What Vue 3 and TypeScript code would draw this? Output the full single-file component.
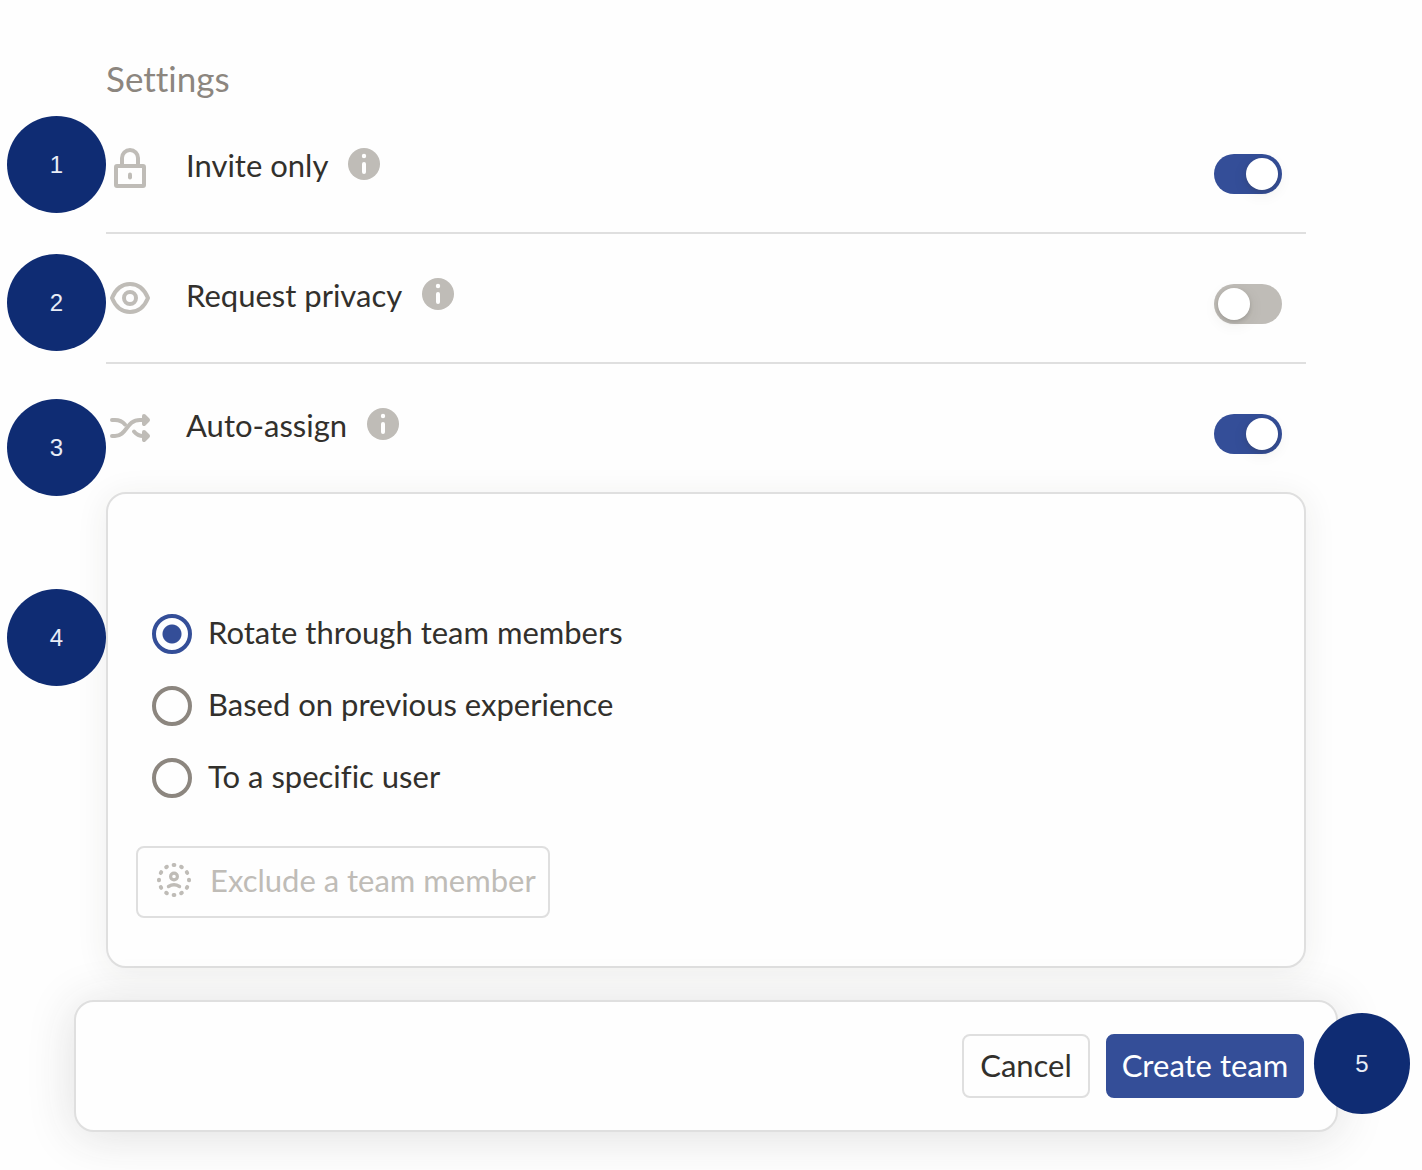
<script setup lang="ts">
import { reactive, ref } from 'vue'

interface Setting {
  id: 'lock' | 'eye' | 'shuffle'
  label: string
  step: number
  enabled: boolean
}

const settings = reactive<Setting[]>([
  { id: 'lock', label: 'Invite only', step: 1, enabled: true },
  { id: 'eye', label: 'Request privacy', step: 2, enabled: false },
  { id: 'shuffle', label: 'Auto-assign', step: 3, enabled: true },
])

const modes = [
  { value: 'rotate', label: 'Rotate through team members' },
  { value: 'experience', label: 'Based on previous experience' },
  { value: 'user', label: 'To a specific user' },
]
const mode = ref('rotate')
</script>

<template>
  <main class="page">
    <h2 class="title">Settings</h2>

    <section class="rows">
      <div v-for="s in settings" :key="s.id" class="row">
        <span class="marker" :class="`marker-${s.step}`">{{ s.step }}</span>
        <svg class="icon" viewBox="0 0 48 48" fill="none" stroke="currentColor" stroke-width="4" stroke-linecap="round" stroke-linejoin="round" aria-hidden="true">
          <template v-if="s.id === 'lock'">
            <rect x="10" y="22" width="28" height="20" rx="1" />
            <path d="M16 21V14a8 8 0 0 1 16 0V21" />
            <path d="M24 30.500V33.500" />
          </template>
          <template v-else-if="s.id === 'eye'">
            <path d="M6 24C9.500 15.500 16 10 24 10S38.500 15.500 42 24C38.500 32.500 32 38 24 38S9.500 32.500 6 24Z" />
            <circle cx="24" cy="24" r="6" />
          </template>
          <template v-else>
            <path d="M6 16H9C13.500 16 16.500 17.500 19 20.500" />
            <path d="M6 32H9C21 32 20 16 34 16H41" />
            <path d="M28 27.500C30.500 30.500 33 32 37 32H41" />
            <path d="M38 12L42 16L38 20ZM38 28L42 32L38 36Z" fill="currentColor" />
          </template>
        </svg>
        <label class="label" :for="s.id">{{ s.label }}</label>
        <button class="info" type="button" :aria-label="`About ${s.label}`">
          <svg viewBox="0 0 32 32" aria-hidden="true">
            <circle cx="16" cy="16" r="16" fill="currentColor" />
            <circle cx="16" cy="8" r="2.200" fill="#fff" />
            <path d="M16 16V24" stroke="#fff" stroke-width="4" stroke-linecap="round" />
          </svg>
        </button>
        <input :id="s.id" v-model="s.enabled" class="switch" type="checkbox" role="switch" />
      </div>
    </section>

    <section class="card">
      <span class="marker marker-4">4</span>
      <div class="options" role="radiogroup" aria-label="Auto-assign">
        <label v-for="m in modes" :key="m.value" class="option">
          <input v-model="mode" class="radio" type="radio" name="mode" :value="m.value" />
          <span class="option-text">{{ m.label }}</span>
        </label>
      </div>
      <button class="exclude" type="button" disabled>
        <svg class="person" viewBox="0 0 36 36" fill="none" stroke="currentColor" stroke-linecap="round" aria-hidden="true">
          <circle cx="18" cy="18" r="15" stroke-width="4" pathLength="120" stroke-dasharray="1 9" stroke-dashoffset="0.500" />
          <circle cx="18" cy="14.500" r="3.400" stroke-width="3.200" />
          <path d="M12.500 24.500Q18 21 23.500 24.500" stroke-width="3.400" />
        </svg>
        <span>Exclude a team member</span>
      </button>
    </section>

    <footer class="actions">
      <button class="btn" type="button">Cancel</button>
      <button class="btn primary" type="button">Create team</button>
      <span class="marker marker-5">5</span>
    </footer>
  </main>
</template>

<style>
body {
  background: #fefefe;
}
</style>

<style scoped>
.page {
  box-sizing: border-box;
  padding: 54px 116px 38px 106px;
  color: #32302c;
  font-family: "Lato", "Liberation Sans", sans-serif;
  font-size: 31px;
  font-variant-ligatures: none;
  line-height: 40px;
}

.title {
  margin: 0 0 2px;
  font-size: 35px;
  font-weight: 400;
  line-height: 48px;
  color: #8c867f;
}

.row {
  position: relative;
  display: flex;
  align-items: flex-start;
  height: 128px;
  border-bottom: 2px solid #dfdfdf;
}

.row:last-child {
  border-bottom: 0;
}

.icon {
  width: 48px;
  height: 48px;
  margin: 40px 32px 0 0;
  color: #bfbcb7;
}

.label {
  margin: 41px 20px 0 0;
}

.info {
  width: 32px;
  height: 32px;
  margin: 44px 0 0;
  padding: 0;
  border: 0;
  background: none;
  color: #bfbcb7;
}

.info svg {
  display: block;
}

.switch {
  appearance: none;
  display: block;
  box-sizing: border-box;
  width: 68px;
  height: 40px;
  margin: 50px 24px 0 auto;
  padding: 4px;
  border-radius: 20px;
  background: #bfbcb7;
}

.switch::before {
  content: "";
  display: block;
  width: 32px;
  height: 32px;
  border-radius: 50%;
  background: #fff;
  box-shadow: 0 2px 4px rgba(50, 48, 44, 0.2), 0 4px 16px rgba(50, 48, 44, 0.08);
}

.switch:checked {
  background: #344e98;
}

.switch:checked::before {
  margin-left: auto;
}

.marker {
  position: absolute;
  display: flex;
  align-items: center;
  justify-content: center;
  width: 99px;
  height: 97px;
  border-radius: 50%;
  background: #0f2c73;
  color: #e9edf6;
  font-family: "Liberation Sans", Arial, sans-serif;
  font-size: 24px;
}

.marker-1 {
  top: 12px;
  left: -99px;
}

.marker-2 {
  top: 20px;
  left: -99px;
}

.marker-3 {
  top: 35px;
  left: -99px;
}

.marker-4 {
  top: 95px;
  left: -101px;
}

.marker-5 {
  top: 11px;
  right: -74px;
  width: 96px;
  height: 101px;
}

.card {
  position: relative;
  padding: 120px 28px 48px;
  border: 2px solid #dfdfdf;
  border-radius: 20px;
  background: #fefefe;
  box-shadow: 0 4px 32px rgba(50, 48, 44, 0.08);
}

.options {
  display: flex;
  flex-direction: column;
  gap: 32px;
  margin: 0 16px 48px;
}

.option {
  display: flex;
  align-items: flex-start;
  gap: 16px;
  height: 40px;
}

.option-text {
  line-height: 36px;
}

.radio {
  appearance: none;
  box-sizing: border-box;
  width: 40px;
  height: 40px;
  margin: 0;
  border: 4px solid #8c867f;
  border-radius: 50%;
  background: #fefefe;
}

.radio:checked {
  border-color: #344e98;
  background: radial-gradient(circle, #344e98 9px, #fefefe 10px);
}

.exclude {
  display: flex;
  align-items: center;
  gap: 18px;
  box-sizing: border-box;
  min-width: 414px;
  height: 72px;
  padding: 0 12px 4px 18px;
  border: 2px solid #dfdfdf;
  border-radius: 8px;
  background: #fefefe;
  color: #bfbcb7;
  font: inherit;
  font-variant-ligatures: none;
}

.person {
  width: 36px;
  height: 36px;
}

.actions {
  position: relative;
  display: flex;
  justify-content: flex-end;
  gap: 16px;
  margin: 32px -32px 0;
  padding: 32px;
  border: 2px solid #dfdfdf;
  border-radius: 20px;
  background: #fefefe;
  box-shadow: 0 4px 48px rgba(50, 48, 44, 0.15);
}

.btn {
  box-sizing: border-box;
  min-width: 128px;
  height: 64px;
  padding: 0 12px 2px;
  border: 2px solid #dfdfdf;
  border-radius: 8px;
  background: #fefefe;
  color: inherit;
  font: inherit;
}

.primary {
  min-width: 198px;
  border-color: #344e98;
  background: #344e98;
  color: #fff;
}
</style>
